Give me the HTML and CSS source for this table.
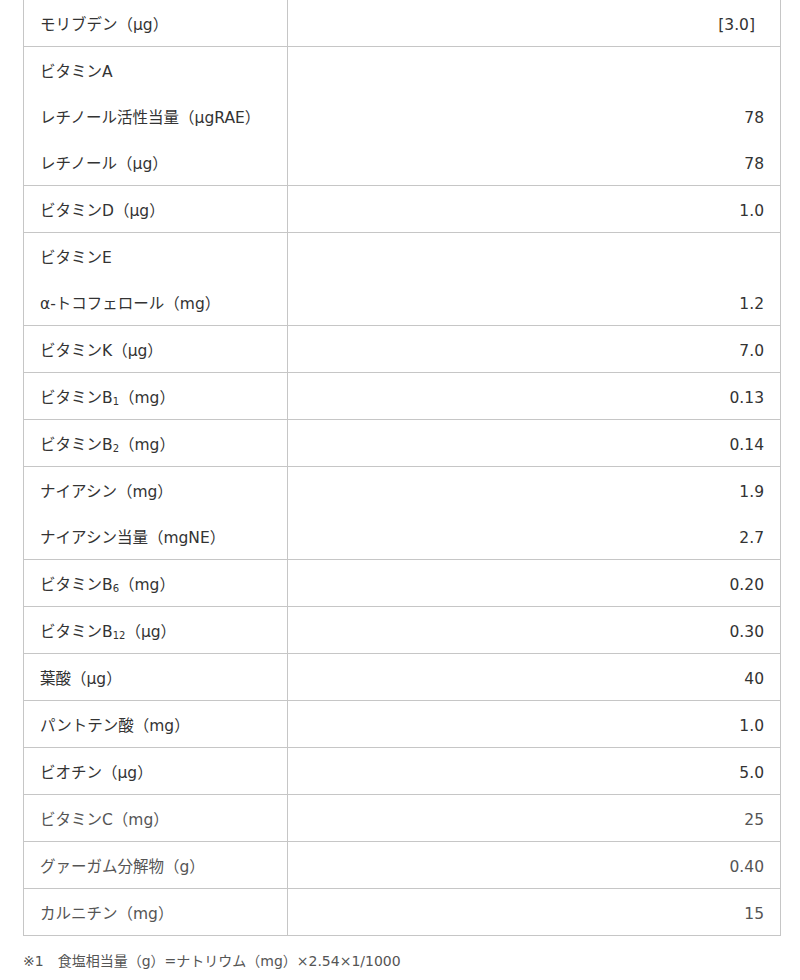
FILE: index.html
```html
<!DOCTYPE html>
<html lang="ja">
<head>
<meta charset="utf-8">
<link rel="stylesheet" href="styles.css">
</head>
<body>
<div class="wrap">
<table class="nutri">
  <tr class="first"><td class="name"><div class="ln">モリブデン（μg）</div></td><td class="val"><div class="ln">[3.0]<span class="pad"></span></div></td></tr>
  <tr><td class="name"><div class="ln">ビタミンA</div><div class="ln">レチノール活性当量（μgRAE）</div><div class="ln">レチノール（μg）</div></td><td class="val"><div class="ln"></div><div class="ln">78</div><div class="ln">78</div></td></tr>
  <tr><td class="name"><div class="ln">ビタミンD（μg）</div></td><td class="val"><div class="ln">1.0</div></td></tr>
  <tr><td class="name"><div class="ln">ビタミンE</div><div class="ln">α-トコフェロール（mg）</div></td><td class="val"><div class="ln"></div><div class="ln">1.2</div></td></tr>
  <tr><td class="name"><div class="ln">ビタミンK（μg）</div></td><td class="val"><div class="ln">7.0</div></td></tr>
  <tr><td class="name"><div class="ln">ビタミンB<sub>1</sub>（mg）</div></td><td class="val"><div class="ln">0.13</div></td></tr>
  <tr><td class="name"><div class="ln">ビタミンB<sub>2</sub>（mg）</div></td><td class="val"><div class="ln">0.14</div></td></tr>
  <tr><td class="name"><div class="ln">ナイアシン（mg）</div><div class="ln">ナイアシン当量（mgNE）</div></td><td class="val"><div class="ln">1.9</div><div class="ln">2.7</div></td></tr>
  <tr><td class="name"><div class="ln">ビタミンB<sub>6</sub>（mg）</div></td><td class="val"><div class="ln">0.20</div></td></tr>
  <tr><td class="name"><div class="ln">ビタミンB<sub>12</sub>（μg）</div></td><td class="val"><div class="ln">0.30</div></td></tr>
  <tr><td class="name"><div class="ln">葉酸（μg）</div></td><td class="val"><div class="ln">40</div></td></tr>
  <tr><td class="name"><div class="ln">パントテン酸（mg）</div></td><td class="val"><div class="ln">1.0</div></td></tr>
  <tr><td class="name"><div class="ln">ビオチン（μg）</div></td><td class="val"><div class="ln">5.0</div></td></tr>
  <tr class="muted"><td class="name"><div class="ln">ビタミンC（mg）</div></td><td class="val"><div class="ln">25</div></td></tr>
  <tr class="muted"><td class="name"><div class="ln">グァーガム分解物（g）</div></td><td class="val"><div class="ln">0.40</div></td></tr>
  <tr class="muted"><td class="name"><div class="ln">カルニチン（mg）</div></td><td class="val"><div class="ln">15</div></td></tr>
</table>
<p class="note">※1　食塩相当量（g）=ナトリウム（mg）×2.54×1/1000</p>
</div>
</body>
</html>
```
FILE: styles.css
```css
html, body {
  margin: 0;
  padding: 0;
  background: #fff;
}
body {
  font-family: "DejaVu Sans", "Noto Sans CJK JP", sans-serif;
  color: #333;
}
.wrap {
  padding-left: 23px;
  width: 758px;
}
.nutri {
  width: 758px;
  border-collapse: collapse;
  margin-top: -1px;
  font-size: 15.5px;
}
.nutri td {
  border: 1px solid #c6c6c6;
  padding: 0 16px;
  vertical-align: top;
}
.nutri td.name {
  width: 231px;
}
.nutri td.val {
  text-align: right;
}
.ln {
  height: 46px;
  line-height: 50px;
  white-space: nowrap;
}
.pad {
  display: inline-block;
  width: 9px;
}
sub {
  font-size: 10px;
  vertical-align: -2px;
  line-height: 0;
}
.muted td {
  color: #555;
}
.note {
  margin: 14px 0 0;
  font-size: 14px;
  line-height: 22px;
  color: #555;
}
```
